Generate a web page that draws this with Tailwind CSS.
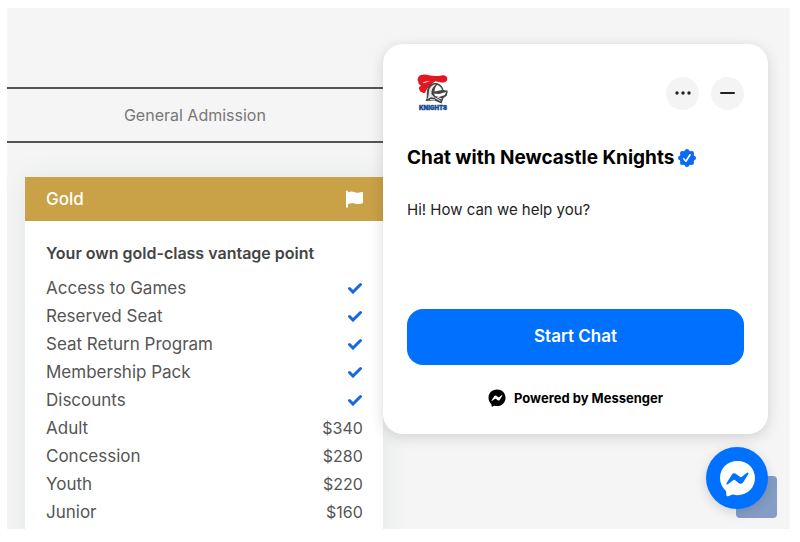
<!DOCTYPE html>
<html lang="en">
<head>
    <meta charset="UTF-8">
    <meta name="viewport" content="width=device-width, initial-scale=1.0">
    <title>Membership | Newcastle Knights</title>
    <script src="https://cdn.jsdelivr.net/npm/@tailwindcss/browser@4"></script>
</head>
<body class="bg-white font-['Inter',sans-serif]">
    <svg class="hidden">
        <symbol id="check" viewBox="0 0 16 12">
            <path d="M2.500 6.500l3.500 3.500 7.500-7.500" fill="none" stroke="currentColor" stroke-width="3" stroke-linecap="round" stroke-linejoin="miter"/>
        </symbol>
        <symbol id="messenger" viewBox="0 0 36 36">
            <path fill="currentColor" fill-rule="evenodd" d="M18 1C8.300 1 1 8.100 1 17.500c0 5 2.100 9.300 5.500 12.300.4.400.5.700.5 1.100l.1 3.100c0 1 1 1.600 1.900 1.200l3.600-1.500c.3-.1.600-.2 1-.1 1.400.4 2.900.6 4.400.6 9.700 0 17-7.200 17-16.700S27.700 1 18 1zM7.300 22.600l5.300-8.400c.9-1.400 2.700-1.700 4-.7l4 3c.4.300.9.300 1.300 0l5.400-4.100c.8-.6 1.800.3 1.300 1.100l-5.200 8.300c-.9 1.400-2.700 1.700-4 .7l-4-3c-.4-.3-.9-.3-1.300 0l-5.500 4.200c-.8.500-1.800-.3-1.300-1.100z"/>
        </symbol>
    </svg>

    <div class="h-screen pt-2 pr-[10px] pb-[13px] pl-[7px]">
        <div class="relative h-full overflow-hidden bg-[#f5f5f5]">
            <main class="flex w-[48%] flex-col pt-[79px] text-[#555]">
                <nav class="border-y-2 border-[#555] py-[14px] text-center">
                    <a href="#" class="block text-base text-[#777]">General Admission</a>
                </nav>

                <section class="mt-[34px] ml-[18px] bg-white shadow-[0_0_28px_rgba(20,50,50,0.08)]">
                    <header class="flex h-11 items-center justify-between bg-[#c9a147] px-5 text-white">
                        <h2 class="pt-0.5 pl-px text-[17px] font-medium">Gold</h2>
                        <svg class="h-[18px] w-[18px]" viewBox="0 0 18 18" fill="currentColor">
                            <path d="M1 1.500a1 1 0 0 1 2 0v.9c3-1.300 4.600-.8 6.500-.2 2.100.7 3.900.6 7.500-.3.500-.1 1 .2 1 .7v9.800c0 .4-.2.700-.6.800-3.200 1.100-5.300 1-7.600.3-2.200-.6-3.900-.5-6.800.6v2.600a1 1 0 0 1-2 0z"/>
                        </svg>
                    </header>
                    <div class="px-5 pt-5 pb-6">
                        <h3 class="pb-[9px] pl-px text-base leading-6 font-semibold text-[#444]">Your own gold-class vantage point</h3>
                        <table class="w-full text-base">
                            <tbody>
                                <tr class="h-7"><td class="pl-px text-[17px] leading-6">Access to Games</td><td><svg class="ml-auto h-3 w-4 text-[#1967e0]" role="img" aria-label="Included"><use href="#check"/></svg></td></tr>
                                <tr class="h-7"><td class="pl-px text-[17px] leading-6">Reserved Seat</td><td><svg class="ml-auto h-3 w-4 text-[#1967e0]" role="img" aria-label="Included"><use href="#check"/></svg></td></tr>
                                <tr class="h-7"><td class="pl-px text-[17px] leading-6">Seat Return Program</td><td><svg class="ml-auto h-3 w-4 text-[#1967e0]" role="img" aria-label="Included"><use href="#check"/></svg></td></tr>
                                <tr class="h-7"><td class="pl-px text-[17px] leading-6">Membership Pack</td><td><svg class="ml-auto h-3 w-4 text-[#1967e0]" role="img" aria-label="Included"><use href="#check"/></svg></td></tr>
                                <tr class="h-7"><td class="pl-px text-[17px] leading-6">Discounts</td><td><svg class="ml-auto h-3 w-4 text-[#1967e0]" role="img" aria-label="Included"><use href="#check"/></svg></td></tr>
                                <tr class="h-7"><td class="pl-px text-[17px] leading-6">Adult</td><td class="text-right">$340</td></tr>
                                <tr class="h-7"><td class="pl-px text-[17px] leading-6">Concession</td><td class="text-right">$280</td></tr>
                                <tr class="h-7"><td class="pl-px text-[17px] leading-6">Youth</td><td class="text-right">$220</td></tr>
                                <tr class="h-7"><td class="pl-px text-[17px] leading-6">Junior</td><td class="text-right">$160</td></tr>
                            </tbody>
                        </table>
                    </div>
                </section>
            </main>

            <!-- chat popup -->
            <aside class="absolute top-9 right-[22px] w-[385px] rounded-[20px] bg-white px-6 pt-[30px] pb-[26px] text-black shadow-[0_3px_14px_rgba(0,0,0,0.15)]">
                <div class="flex items-center justify-between pl-2.5">
                    <svg class="h-[37px] w-8" viewBox="0 0 32 37" role="img" aria-label="Newcastle Knights">
                        <path fill="#e3171f" d="M1.500 3C3 .2 8 0 12 1.300c4 1.100 9 .9 12.500.1 3-.7 5.800.4 5.800 3.400 0 3.200-3 4.300-6 3.600l-6-1.100c-3 2-6.500 5-8.500 8L8 19c-3.500.2-6-2.300-6-5 0-1.200 1-2 2.300-2C2 10.500.600 9 1.500 7.600 0 6.500.400 4.500 1.500 3z"/>
                        <path fill="#fff" d="M6 8.600c2-1.100 4.500-1.500 7-1.400-2.600.5-4.600 1.200-6.600 2.100z"/>
                        <path fill="#444" d="M8.500 27c2-3 1-6 1.500-10C10.700 11.500 15 8.300 19 9c4.500.6 6.700 3.700 7.500 7l4.300.7-1 5-3.300 2.300-2 5.500-7-3z"/>
                        <path fill="#e6e6e6" d="M12 17c.5-4 3.800-6.700 7-6.500-3.500 2.500-4.800 5.500-4.600 9.500l3.600 4-4-.7-4 2c1.800-2.300 1.600-5 2-8.300z"/>
                        <path fill="#fff" d="M20 11c3 .8 4.500 2.800 5 5l-7.500 1.500c.2-2.700 1-4.800 2.500-6.500zM17 19.500l5 .5 7-2-1 3-6 2-4-1z"/>
                        <path stroke="#ddd" stroke-width="1" d="M18 23.800l5.500 3M20 23.200l5 1.800M13 25.500l5 .3"/>
                        <text x="16" y="36" text-anchor="middle" font-size="6" font-weight="900" fill="#164a91" stroke="#164a91" stroke-width=".4">KNIGHTS</text>
                    </svg>
                    <div class="flex gap-3 pt-px">
                        <button type="button" aria-label="More options" class="flex h-[33px] w-[33px] items-center justify-center rounded-full bg-[#f4f4f4]">
                            <svg class="h-1 w-4" viewBox="0 0 16 4" fill="#222"><circle cx="2" cy="2" r="1.700"/><circle cx="8" cy="2" r="1.700"/><circle cx="14" cy="2" r="1.700"/></svg>
                        </button>
                        <button type="button" aria-label="Minimise" class="flex h-[33px] w-[33px] items-center justify-center rounded-full bg-[#f4f4f4]">
                            <span class="h-0.5 w-[15px] rounded-full bg-[#222]"></span>
                        </button>
                    </div>
                </div>

                <div class="mt-[33px] flex items-center gap-1 whitespace-nowrap">
                    <h1 class="text-[19px] leading-7 font-bold">Chat with Newcastle Knights</h1>
                    <svg class="h-[18px] w-[18px]" viewBox="0 0 18 18" role="img" aria-label="Verified">
                        <g fill="#0a6cf5">
                            <circle cx="9" cy="9" r="7.500"/>
                            <circle cx="9" cy="2.300" r="2.300"/><circle cx="13.700" cy="4.300" r="2.300"/><circle cx="15.700" cy="9" r="2.300"/><circle cx="13.700" cy="13.700" r="2.300"/>
                            <circle cx="9" cy="15.700" r="2.300"/><circle cx="4.300" cy="13.700" r="2.300"/><circle cx="2.300" cy="9" r="2.300"/><circle cx="4.300" cy="4.300" r="2.300"/>
                        </g>
                        <path d="M5.700 9.800l2.200 2.400 4.200-6.400" fill="none" stroke="#fff" stroke-width="1.600" stroke-linecap="round" stroke-linejoin="round"/>
                    </svg>
                </div>
                <p class="mt-[26px] text-[15px] leading-6 text-[#222]">Hi! How can we help you?</p>

                <button type="button" class="mt-[87px] h-14 w-full rounded-2xl bg-[#0071ff] text-[17px] font-semibold text-white">Start Chat</button>
                <div class="mt-[23px] flex items-center justify-center gap-2 text-[13px] leading-5 font-bold">
                    <svg class="h-[18px] w-[18px]"><use href="#messenger"/></svg>
                    <span>Powered by Messenger</span>
                </div>
            </aside>

            <a href="#" aria-label="Back to top" class="absolute right-[13px] bottom-[11px] h-[42px] w-[41px] rounded-sm bg-[#859dc6]"></a>
            <button type="button" aria-label="Open Messenger" class="absolute right-[22px] bottom-5 flex h-[62px] w-[62px] items-center justify-center rounded-full bg-[#0071ff] text-white shadow-[0_3px_12px_rgba(0,0,0,0.15)]">
                <svg class="h-[37px] w-[37px]"><use href="#messenger"/></svg>
            </button>
        </div>
    </div>
</body>
</html>
